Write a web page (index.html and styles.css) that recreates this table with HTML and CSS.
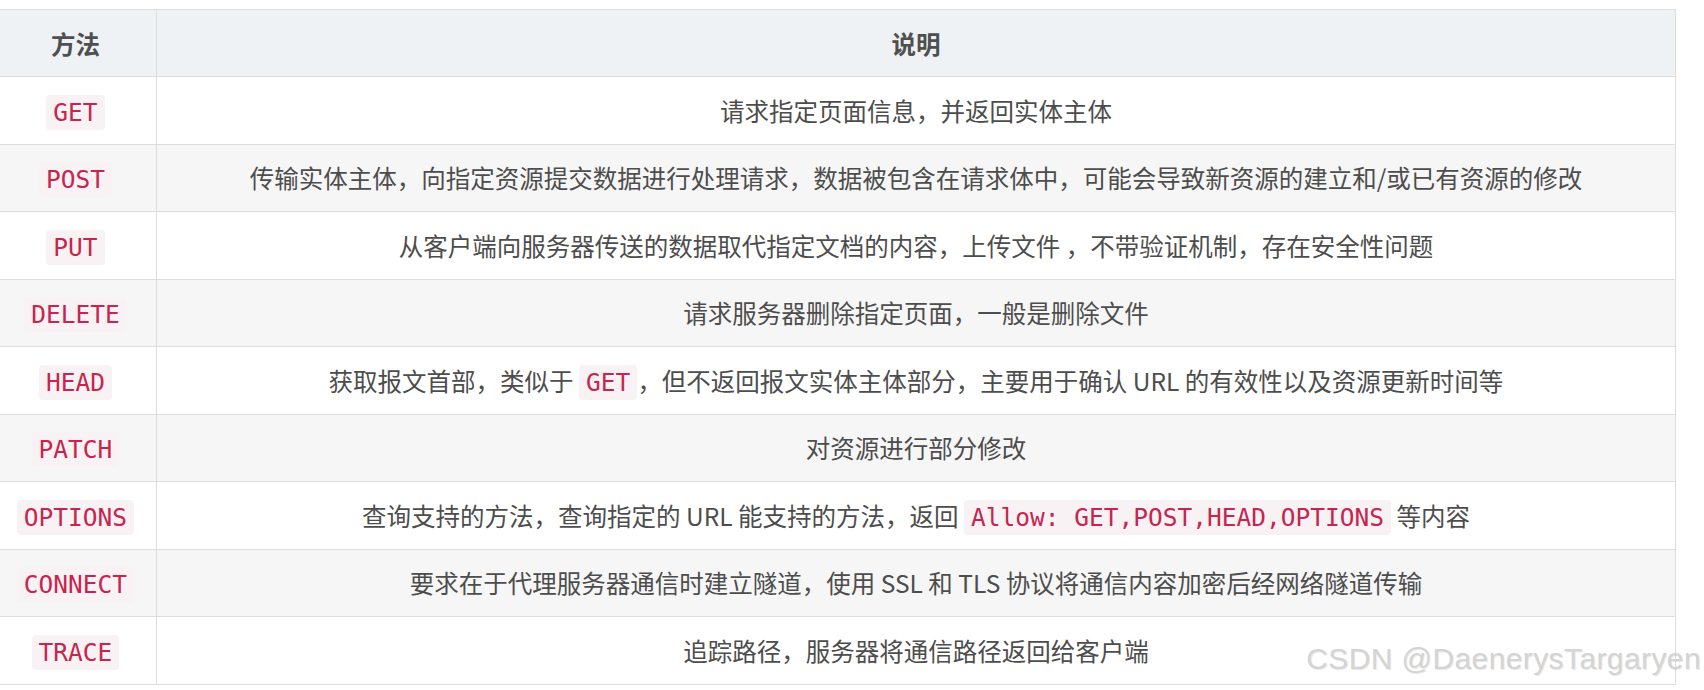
FILE: index.html
```html
<!DOCTYPE html>
<html lang="zh-CN">
<head>
    <meta charset="UTF-8">
    <title>HTTP 请求方法</title>
    <link rel="stylesheet" href="styles.css">
</head>
<body>
    <table class="methods">
        <colgroup>
            <col class="col-method">
            <col>
        </colgroup>
        <thead>
            <tr>
                <th>方法</th>
                <th>说明</th>
            </tr>
        </thead>
        <tbody>
            <tr>
                <td><code>GET</code></td>
                <td>请求指定页面信息，并返回实体主体</td>
            </tr>
            <tr>
                <td><code>POST</code></td>
                <td>传输实体主体，向指定资源提交数据进行处理请求，数据被包含在请求体中，可能会导致新资源的建立和/或已有资源的修改</td>
            </tr>
            <tr>
                <td><code>PUT</code></td>
                <td>从客户端向服务器传送的数据取代指定文档的内容，上传文件 ，不带验证机制，存在安全性问题</td>
            </tr>
            <tr>
                <td><code>DELETE</code></td>
                <td>请求服务器删除指定页面，一般是删除文件</td>
            </tr>
            <tr>
                <td><code>HEAD</code></td>
                <td>获取报文首部，类似于 <code>GET</code>，但不返回报文实体主体部分，主要用于确认 URL 的有效性以及资源更新时间等</td>
            </tr>
            <tr>
                <td><code>PATCH</code></td>
                <td>对资源进行部分修改</td>
            </tr>
            <tr>
                <td><code>OPTIONS</code></td>
                <td>查询支持的方法，查询指定的 URL 能支持的方法，返回 <code>Allow: GET,POST,HEAD,OPTIONS</code> 等内容</td>
            </tr>
            <tr>
                <td><code>CONNECT</code></td>
                <td>要求在于代理服务器通信时建立隧道，使用 SSL 和 TLS 协议将通信内容加密后经网络隧道传输</td>
            </tr>
            <tr>
                <td><code>TRACE</code></td>
                <td>追踪路径，服务器将通信路径返回给客户端</td>
            </tr>
        </tbody>
    </table>

    <div class="watermark">CSDN @DaenerysTargaryen</div>
</body>
</html>
```

FILE: styles.css
```css
body {
    margin: 0;
    padding: 0;
    font-family: "Noto Sans CJK SC", "Noto Sans", sans-serif;
    color: #4d4d4d;
    background-color: #fff;
    position: relative;
    overflow: hidden;
}
.methods {
    border-collapse: collapse;
    table-layout: fixed;
    width: 1682px;
    margin: 9px 0 0 -6px;
    font-size: 24.5px;
}
.col-method {
    width: 162px;
}
.methods th,
.methods td {
    border: 1px solid #dddddd;
    text-align: center;
    padding: 0 12px;
    height: 66.5px;
    white-space: nowrap;
}
.methods th {
    height: 66px;
    background-color: #eff2f5;
    font-weight: bold;
    color: #4f4f4f;
}
.methods tbody tr:nth-child(even) {
    background-color: #f6f6f6;
}
code {
    font-family: "DejaVu Sans Mono", "Liberation Mono", monospace;
    font-size: 24.5px;
    color: #c7254e;
    background-color: #f9f2f4;
    border-radius: 4px;
    padding: 3px 7px;
}
.watermark {
    position: absolute;
    right: 3px;
    top: 642px;
    font-family: "Liberation Sans", Arial, sans-serif;
    font-size: 30px;
    letter-spacing: 0.4px;
    color: #d4d4d4;
    text-shadow: 1px 1px 1px rgba(0, 0, 0, 0.1);
}
```
